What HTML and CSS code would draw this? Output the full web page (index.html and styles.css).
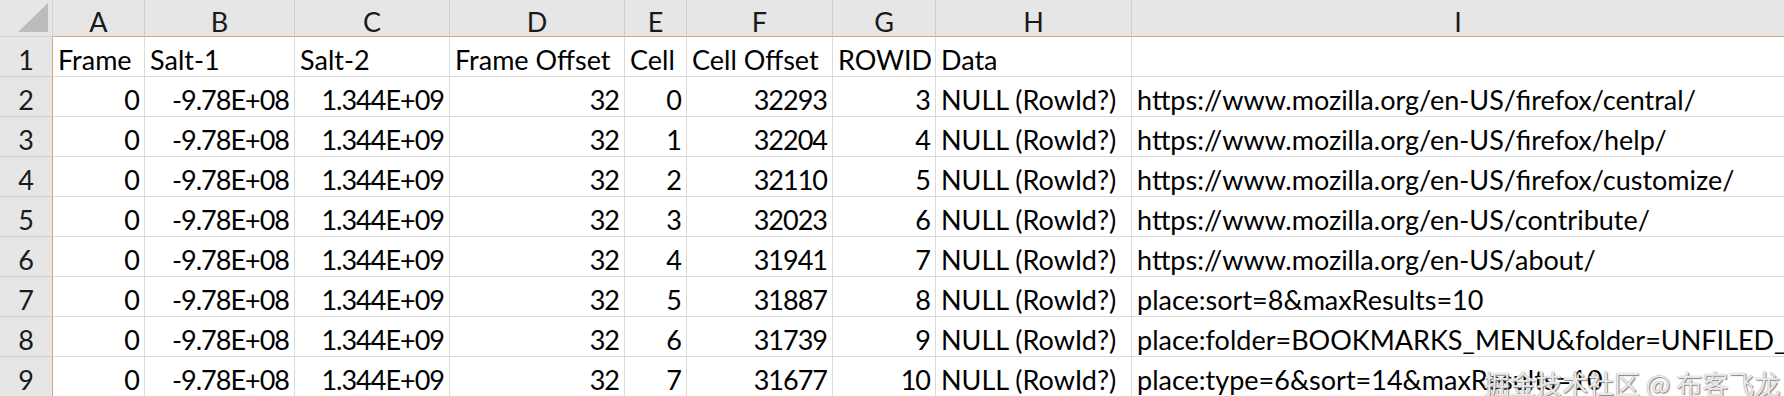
FILE: index.html
```html
<!DOCTYPE html>
<html>
<head>
<meta charset="utf-8">
<link rel="stylesheet" href="styles.css">
</head>
<body>
<div class="sheet">
  <div class="corner"><svg class="tri" width="31" height="30" viewBox="0 0 31 30"><polygon points="30,0 30,29 0,29" fill="#bcbcbc"/></svg></div>
  <div class="colh">A</div><div class="colh">B</div><div class="colh">C</div><div class="colh">D</div><div class="colh">E</div><div class="colh">F</div><div class="colh">G</div><div class="colh">H</div><div class="colh last">I</div>

  <div class="rowh">1</div>
  <div class="c">Frame</div><div class="c">Salt-1</div><div class="c">Salt-2</div><div class="c">Frame Offset</div><div class="c">Cell</div><div class="c">Cell Offset</div><div class="c">ROWID</div><div class="c">Data</div><div class="c last"></div>

  <div class="rowh">2</div>
  <div class="c n">0</div><div class="c n">-9.78E+08</div><div class="c n">1.344E+09</div><div class="c n">32</div><div class="c n">0</div><div class="c n">32293</div><div class="c n">3</div><div class="c">NULL (RowId?)</div><div class="c last">https://www.mozilla.org/en-US/firefox/central/</div>

  <div class="rowh">3</div>
  <div class="c n">0</div><div class="c n">-9.78E+08</div><div class="c n">1.344E+09</div><div class="c n">32</div><div class="c n">1</div><div class="c n">32204</div><div class="c n">4</div><div class="c">NULL (RowId?)</div><div class="c last">https://www.mozilla.org/en-US/firefox/help/</div>

  <div class="rowh">4</div>
  <div class="c n">0</div><div class="c n">-9.78E+08</div><div class="c n">1.344E+09</div><div class="c n">32</div><div class="c n">2</div><div class="c n">32110</div><div class="c n">5</div><div class="c">NULL (RowId?)</div><div class="c last">https://www.mozilla.org/en-US/firefox/customize/</div>

  <div class="rowh">5</div>
  <div class="c n">0</div><div class="c n">-9.78E+08</div><div class="c n">1.344E+09</div><div class="c n">32</div><div class="c n">3</div><div class="c n">32023</div><div class="c n">6</div><div class="c">NULL (RowId?)</div><div class="c last">https://www.mozilla.org/en-US/contribute/</div>

  <div class="rowh">6</div>
  <div class="c n">0</div><div class="c n">-9.78E+08</div><div class="c n">1.344E+09</div><div class="c n">32</div><div class="c n">4</div><div class="c n">31941</div><div class="c n">7</div><div class="c">NULL (RowId?)</div><div class="c last">https://www.mozilla.org/en-US/about/</div>

  <div class="rowh">7</div>
  <div class="c n">0</div><div class="c n">-9.78E+08</div><div class="c n">1.344E+09</div><div class="c n">32</div><div class="c n">5</div><div class="c n">31887</div><div class="c n">8</div><div class="c">NULL (RowId?)</div><div class="c last">place:sort=8&amp;maxResults=10</div>

  <div class="rowh">8</div>
  <div class="c n">0</div><div class="c n">-9.78E+08</div><div class="c n">1.344E+09</div><div class="c n">32</div><div class="c n">6</div><div class="c n">31739</div><div class="c n">9</div><div class="c">NULL (RowId?)</div><div class="c last">place:folder=BOOKMARKS_MENU&amp;folder=UNFILED_BOOKMARKS&amp;folder=TOOLBAR&amp;sort=12</div>

  <div class="rowh">9</div>
  <div class="c n">0</div><div class="c n">-9.78E+08</div><div class="c n">1.344E+09</div><div class="c n">32</div><div class="c n">7</div><div class="c n">31677</div><div class="c n">10</div><div class="c">NULL (RowId?)</div><div class="c last">place:type=6&amp;sort=14&amp;maxResults=10</div>
</div>
<div class="watermark">掘金技术社区 @ 布客飞龙</div>
</body>
</html>
```
FILE: styles.css
```css
html, body {
  margin: 0;
  padding: 0;
  background: #ffffff;
  overflow: hidden;
  width: 1784px;
  height: 396px;
}
body {
  position: relative;
  font-family: Lato, "Liberation Sans", sans-serif;
  font-size: 27px;
  color: #000;
}
.sheet {
  display: grid;
  grid-template-columns: 53px 92px 150px 155px 175px 62px 146px 103px 196px 1fr;
  grid-template-rows: 37px repeat(9, 40px);
  width: 1784px;
}
.sheet > div {
  box-sizing: border-box;
  white-space: nowrap;
  overflow: hidden;
}
.corner {
  background: #e6e6e6;
  border-right: 1px solid #d2d2d2;
  border-bottom: 1px solid #d2d2d2;
  display: flex;
  align-items: flex-end;
  justify-content: flex-end;
  padding: 0 3px 3px 0;
}
.tri { display: block; }
.colh {
  background: #e6e6e6;
  border-right: 1px solid #cfcfcf;
  border-bottom: 1px solid #d7a67c;
  display: flex;
  align-items: center;
  justify-content: center;
  padding-top: 6px;
  color: #1a1a1a;
}
.rowh {
  background: #e6e6e6;
  border-right: 1px solid #d7a67c;
  border-bottom: 1px solid #cbcbcb;
  display: flex;
  align-items: center;
  justify-content: center;
  padding-top: 5px;
  color: #1a1a1a;
}
.c {
  border-right: 1px solid #dadada;
  border-bottom: 1px solid #dadada;
  display: flex;
  align-items: center;
  padding: 5px 5px 0 5px;
}
.c.n {
  justify-content: flex-end;
  letter-spacing: -1px;
}
.last { border-right: none; }
.watermark {
  position: absolute;
  left: 1484px;
  top: 367px;
  font-family: "Noto Sans CJK SC", sans-serif;
  font-size: 26px;
  line-height: 32px;
  color: rgba(250, 250, 250, 0.9);
  text-shadow: 0 0 1px #777, 1px 1px 1px #888;
  white-space: nowrap;
}
```
